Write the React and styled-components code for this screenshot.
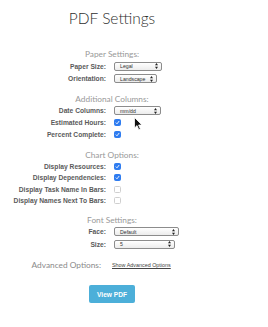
import React from 'react';
import styled, { createGlobalStyle } from 'styled-components';

const GlobalStyle = createGlobalStyle`
  html, body {
    margin: 0;
    padding: 0;
    background: #ffffff;
  }
  body {
    font-family: 'Liberation Sans', Arial, sans-serif;
  }
`;

const Page = styled.div`
  position: relative;
  width: 268px;
  height: 327px;
  box-sizing: border-box;
  padding: 8px 44px 0 0;
  overflow: hidden;
`;

const Title = styled.h1`
  margin: 0;
  font-family: Lato, 'Open Sans', sans-serif;
  font-weight: 300;
  font-size: 15.5px;
  line-height: 20px;
  color: #2e2e2e;
  text-align: center;
`;

const Section = styled.section`
  margin-top: ${(p) => p.$top}px;
`;

const Heading = styled.div`
  font-family: Lato, 'Open Sans', sans-serif;
  font-weight: 400;
  font-size: 8.3px;
  line-height: 11px;
  color: #999999;
  text-align: center;
`;

const Row = styled.div`
  display: grid;
  grid-template-columns: 106px auto;
  column-gap: 8px;
  align-items: center;
  height: ${(p) => p.$h || 11.5}px;
`;

const Label = styled.span`
  font-size: 6.7px;
  font-weight: bold;
  color: #5a5a5a;
  text-align: right;
  white-space: nowrap;
`;

const Select = styled.div`
  display: flex;
  align-items: center;
  justify-content: space-between;
  box-sizing: border-box;
  width: ${(p) => p.$w}px;
  height: 9px;
  padding: 0 3px 0 5px;
  border: 1px solid #8c8c8c;
  border-radius: 2px;
  background: linear-gradient(#ffffff, #ececec);
  font-size: 5.2px;
  color: #333;
`;

const Arrows = styled.svg`
  width: 3px;
  height: 6px;
`;

const Check = styled.div`
  box-sizing: border-box;
  width: 7px;
  height: 7px;
  border-radius: 1.5px;
  display: flex;
  align-items: center;
  justify-content: center;
  background: ${(p) => (p.$on ? '#2f7cf0' : '#ffffff')};
  border: 1px solid ${(p) => (p.$on ? '#2f7cf0' : '#cfcfcf')};
`;

const AdvancedRow = styled.div`
  display: grid;
  grid-template-columns: 101px auto;
  column-gap: 11px;
  align-items: center;
  height: 12px;
  margin-top: 8.5px;
`;

const AdvancedLabel = styled.span`
  font-family: Lato, 'Open Sans', sans-serif;
  font-weight: 400;
  font-size: 8.3px;
  color: #8a8a8a;
  text-align: right;
  white-space: nowrap;
`;

const Link = styled.a`
  font-size: 5.4px;
  color: #444;
  text-decoration: underline;
  white-space: nowrap;
`;

const ButtonWrap = styled.div`
  display: flex;
  padding-left: 89px;
  margin-top: 14px;
`;

const Button = styled.button`
  width: 46px;
  height: 18px;
  border: none;
  border-radius: 2px;
  background: #4cafd9;
  color: #ffffff;
  font-family: 'Liberation Sans', Arial, sans-serif;
  font-weight: bold;
  font-size: 6.6px;
  padding: 0;
`;

const Cursor = styled.svg`
  position: absolute;
  left: 134px;
  top: 117px;
  width: 9px;
  height: 14px;
`;

const SelectBox = ({ value, width }) => (
  <Select $w={width}>
    <span>{value}</span>
    <Arrows viewBox="0 0 3 6">
      <path d="M1.5 0 L3 2.2 L0 2.2 Z M1.5 6 L3 3.8 L0 3.8 Z" fill="#222" />
    </Arrows>
  </Select>
);

const CheckBox = ({ on }) => (
  <Check $on={on}>
    {on && (
      <svg width="5" height="5" viewBox="0 0 5 5">
        <path d="M0.8 2.6 L2 3.8 L4.2 1" stroke="#fff" strokeWidth="0.9" fill="none" />
      </svg>
    )}
  </Check>
);

const SelectRow = ({ label, value, width }) => (
  <Row $h={12.5}>
    <Label>{label}</Label>
    <SelectBox value={value} width={width} />
  </Row>
);

const CheckRow = ({ label, on }) => (
  <Row>
    <Label>{label}</Label>
    <CheckBox on={on} />
  </Row>
);

export default function App() {
  return (
    <>
      <GlobalStyle />
      <Page>
        <Title>PDF Settings</Title>
        <Section $top={21}>
          <Heading>Paper Settings:</Heading>
          <SelectRow label="Paper Size:" value="Legal" width={48} />
          <SelectRow label="Orientation:" value="Landscape" width={43} />
        </Section>
        <Section $top={8.5}>
          <Heading>Additional Columns:</Heading>
          <SelectRow label="Date Columns:" value="mm/dd" width={47} />
          <CheckRow label="Estimated Hours:" on />
          <CheckRow label="Percent Complete:" on />
        </Section>
        <Section $top={9.5}>
          <Heading>Chart Options:</Heading>
          <CheckRow label="Display Resources:" on />
          <CheckRow label="Display Dependencies:" on />
          <CheckRow label="Display Task Name In Bars:" />
          <CheckRow label="Display Names Next To Bars:" />
        </Section>
        <Section $top={8}>
          <Heading>Font Settings:</Heading>
          <SelectRow label="Face:" value="Default" width={65} />
          <SelectRow label="Size:" value="5" width={61} />
        </Section>
        <AdvancedRow>
          <AdvancedLabel>Advanced Options:</AdvancedLabel>
          <Link>Show Advanced Options</Link>
        </AdvancedRow>
        <ButtonWrap>
          <Button>View PDF</Button>
        </ButtonWrap>
        <Cursor viewBox="0 0 9 14">
          <path d="M0.5 0.5 L0.5 11 L3 8.6 L4.8 12.8 L6.4 12.1 L4.6 8 L8 8 Z" fill="#111" stroke="#fff" strokeWidth="0.8" />
        </Cursor>
      </Page>
    </>
  );
}
